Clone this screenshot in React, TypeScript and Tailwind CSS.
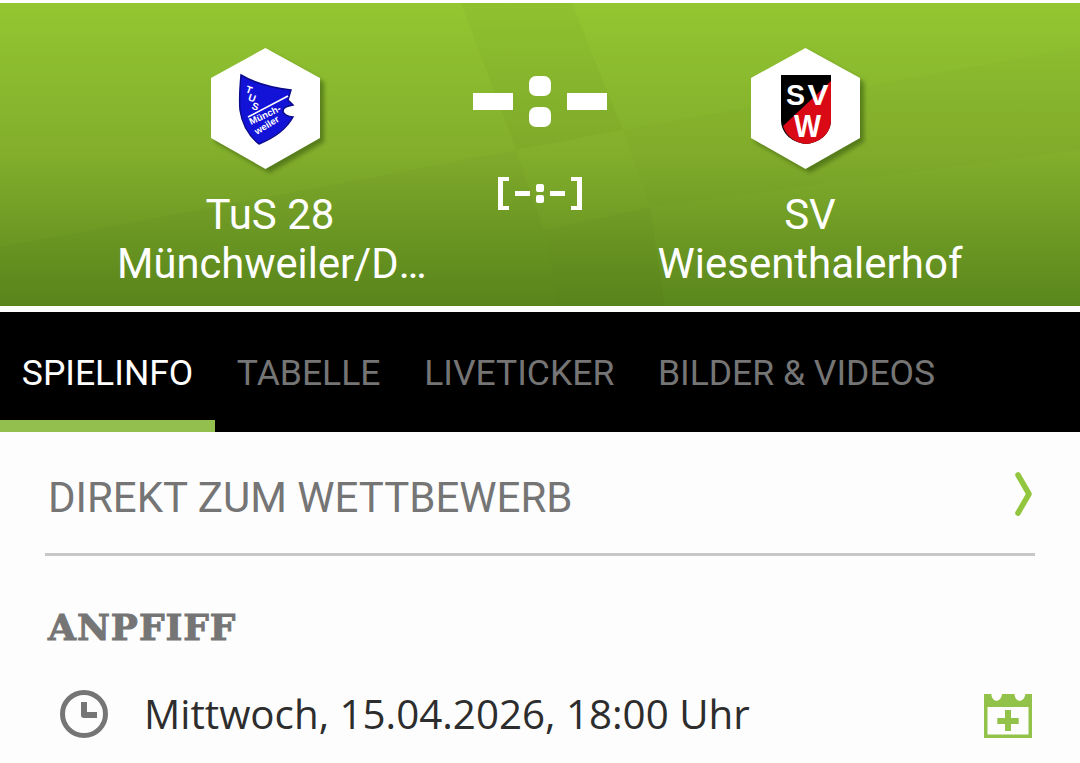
import { ReactNode } from "react";

const tabs = ["SPIELINFO", "TABELLE", "LIVETICKER", "BILDER & VIDEOS"];

function HexBadge({ children }: { children: ReactNode }) {
  return (
    <svg width="124" height="128" viewBox="0 0 124 128" className="block">
      <polygon points="61.5,4 116,34 116,94 61.5,125 7,94 7,34" fill="#3a5c10" opacity="0.6" style={{ filter: "blur(2px)" }} />
      <polygon points="57.5,0 112,30 112,90 57.5,121 3,90 3,30" fill="#ffffff" />
      {children}
    </svg>
  );
}

function TusLogo() {
  const font = "Liberation Sans, sans-serif";
  return (
    <HexBadge>
      <path d="M33 27 C48 36 66 40 83 42 L80 52 L85 57 C79 58 75 60 75 63 C75 66 80 69 85 69 C79 80 66 90 51 96 C41 88 34 76 32 62 C31 50 32 38 33 27 Z" fill="#1313d8" stroke="#0b0b8c" strokeWidth="1.5" />
      <path d="M40 69 L80 48" stroke="#fff" strokeWidth="1.6" />
      <text x="37" y="44" fontSize="10" fontWeight="700" fill="#fff" fontFamily={font} transform="rotate(20 37 44)">T</text>
      <text x="39.5" y="52" fontSize="10" fontWeight="700" fill="#fff" fontFamily={font} transform="rotate(20 39.5 52)">U</text>
      <text x="43" y="60.5" fontSize="10" fontWeight="700" fill="#fff" fontFamily={font} transform="rotate(20 43 60.5)">S</text>
      <text x="43" y="77" fontSize="9.5" fontWeight="700" fill="#fff" fontFamily={font} transform="rotate(-25 43 77)">Münch-</text>
      <text x="49" y="87" fontSize="9.5" fontWeight="700" fill="#fff" fontFamily={font} transform="rotate(-32 49 87)">weiler</text>
    </HexBadge>
  );
}

function SvwLogo() {
  const font = "Liberation Sans, sans-serif";
  return (
    <HexBadge>
      <path d="M33 27 H83 V72 C83 86 71 95 58 96 C45 95 33 86 33 72 Z" fill="#000" />
      <path d="M83 33 V72 C83 86 71 95 58 96 C47 95 38 88 35 78 Z" fill="#d90a16" />
      <text x="38" y="56.5" fontSize="29" fontWeight="700" fill="#fff" fontFamily={font} textLength="19" lengthAdjust="spacingAndGlyphs">S</text>
      <text x="59.5" y="56.5" fontSize="29" fontWeight="700" fill="#fff" fontFamily={font} textLength="21" lengthAdjust="spacingAndGlyphs">V</text>
      <text x="46" y="89" fontSize="32" fontWeight="700" fill="#fff" fontFamily={font} textLength="27" lengthAdjust="spacingAndGlyphs">W</text>
    </HexBadge>
  );
}

function CalendarPlus() {
  return (
    <svg className="mt-[4px]" width="48" height="44" viewBox="0 0 48 44">
      <path d="M0 0 H7.3 C8 9 17 9 18 0 H30.5 C31 9 40.5 9 41.3 0 H48 V44 H0 Z M3.5 13 V40.5 H44.5 V13 Z" fill="#92c24a" fillRule="evenodd" />
      <path d="M21 16 H27 V24 H34.7 V30 H27 V37 H21 V30 H13.3 V24 H21 Z" fill="#92c24a" />
    </svg>
  );
}

export default function App() {
  return (
    <div className="h-[763px] w-[1080px] overflow-hidden bg-[#fdfdfd] font-['Roboto',sans-serif]">
      <div className="bg-white pt-[3px]">
        {/* Match header */}
        <header className="relative h-[303px] overflow-hidden bg-gradient-to-b from-[#93c631] via-[#82ae2c] to-[#5a871c]">
          <svg className="absolute inset-0" width="1080" height="303" viewBox="0 0 1080 303">
            <polygon points="461,0 572,0 623,127 516,147" fill="#000" opacity="0.022" />
            <polygon points="0,244 516,147 544,227 558,303 0,303" fill="#000" opacity="0.02" />
            <polygon points="544,227 650,204 665,303 558,303" fill="#000" opacity="0.025" />
            <polygon points="623,127 1080,44 1080,147 650,204" fill="#000" opacity="0.012" />
          </svg>
          <div className="relative grid grid-cols-[324px_216px_324px] justify-center text-white">
            <div className="flex min-w-0 flex-col items-center pt-[45px]">
              <TusLogo />
              <div className="mt-[14px] w-full text-center text-[42px] leading-[49px]">
                <div>TuS 28</div>
                <div className="truncate pl-[9px] text-[41.7px]">Münchweiler/Dudenhofen</div>
              </div>
            </div>
            <div className="flex flex-col items-center pt-[73px]">
              <div className="flex items-center gap-[16px]">
                <div className="h-[17px] w-[40px] bg-white" />
                <div className="flex flex-col gap-[11px]">
                  <div className="h-[20px] w-[22px] rounded-[7px] bg-white" />
                  <div className="h-[20px] w-[22px] rounded-[7px] bg-white" />
                </div>
                <div className="h-[17px] w-[40px] bg-white" />
              </div>
              <div className="mt-[50px] flex h-[33px] items-center gap-[6px]">
                <div className="h-[33px] w-[11px] border-y-[4px] border-l-[5px] border-white" />
                <div className="h-[5px] w-[15px] bg-white" />
                <div className="flex flex-col gap-[3px]">
                  <div className="h-[8px] w-[8px] rounded-[2px] bg-white" />
                  <div className="h-[8px] w-[8px] rounded-[2px] bg-white" />
                </div>
                <div className="h-[5px] w-[15px] bg-white" />
                <div className="h-[33px] w-[11px] border-y-[4px] border-r-[5px] border-white" />
              </div>
            </div>
            <div className="flex min-w-0 flex-col items-center pt-[45px]">
              <SvwLogo />
              <div className="mt-[14px] w-full text-center text-[42px] leading-[49px]">
                <div>SV</div>
                <div className="truncate">Wiesenthalerhof</div>
              </div>
            </div>
          </div>
        </header>
      </div>

      {/* Tabs */}
      <nav className="mt-[6px] flex h-[120px] bg-black text-[35.5px] text-[#757575]">
        {tabs.map((tab, i) => (
          <div
            key={tab}
            className={`flex items-center border-b-[12px] px-[21.8px] pt-[16px] whitespace-nowrap ${
              i === 0 ? "border-[#92bf4e] text-white" : "border-transparent"
            }`}
          >
            {tab}
          </div>
        ))}
      </nav>

      {/* Competition link */}
      <div className="mx-[45px] flex h-[124px] items-center justify-between border-b-[3px] border-[#c8c8c8] pr-[2px] pl-[3px] text-[42px] text-[#757575]">
        <span className="pt-[10px]">DIREKT ZUM WETTBEWERB</span>
        <svg className="mt-[3px]" width="18" height="44" viewBox="0 0 18 44" fill="none" stroke="#92c63f" strokeWidth="5.5" strokeLinecap="round" strokeLinejoin="round">
          <path d="M3 3 L14 22 L3 41" />
        </svg>
      </div>

      {/* Kick-off */}
      <section className="px-[48px] pt-[46px]">
        <h2 className="font-['DejaVu_Serif',serif] text-[36px] leading-[50px] font-bold tracking-[1px] text-[#757575] [-webkit-text-stroke:1px_#757575]">ANPFIFF</h2>
        <div className="mt-[38px] flex items-center justify-between pl-[12px]">
          <div className="flex items-center gap-[36px]">
            <svg width="48" height="48" viewBox="0 0 48 48" fill="none" stroke="#757575" strokeWidth="5">
              <circle cx="24" cy="24" r="21.5" />
              <path d="M24 12 V25 H37" strokeWidth="6" strokeLinejoin="round" />
            </svg>
            <span className="font-['Open_Sans',sans-serif] text-[40.3px] leading-[48px] text-[#2d2d2d]">Mittwoch, 15.04.2026, 18:00 Uhr</span>
          </div>
          <CalendarPlus />
        </div>
      </section>
    </div>
  );
}
